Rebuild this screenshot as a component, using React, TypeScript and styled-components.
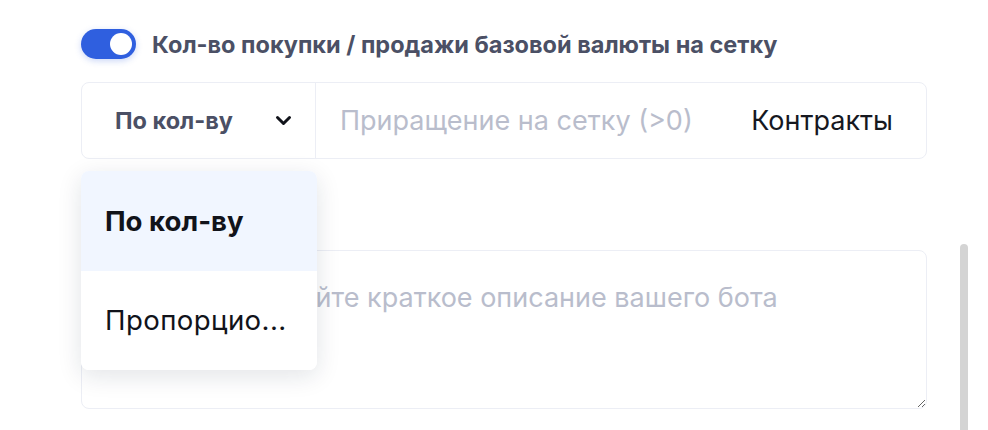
import React from "react";
import styled, { createGlobalStyle } from "styled-components";

const GlobalStyle = createGlobalStyle`
  html, body {
    margin: 0;
    padding: 0;
    background: #ffffff;
    font-family: Inter, "Noto Sans", sans-serif;
  }
  * {
    box-sizing: border-box;
  }
`;

const Page = styled.div`
  display: flex;
  width: 988px;
  height: 430px;
  overflow: hidden;
`;

const Content = styled.div`
  display: flex;
  flex-direction: column;
  width: 846px;
  margin-left: 81px;
  padding-top: 29px;
`;

const ToggleRow = styled.label`
  display: flex;
  align-items: center;
  gap: 16px;
`;

const Toggle = styled.span<{ $on: boolean }>`
  display: flex;
  align-items: center;
  justify-content: ${(p) => (p.$on ? "flex-end" : "flex-start")};
  width: 55px;
  height: 30px;
  padding: 4px;
  border-radius: 15px;
  background: ${(p) => (p.$on ? "#2f5fdf" : "#d5d8e2")};
  box-shadow: 0 2px 6px rgba(47, 95, 223, 0.25);
`;

const Knob = styled.span`
  width: 22px;
  height: 22px;
  border-radius: 50%;
  background: #ffffff;
`;

const ToggleText = styled.span`
  font-size: 23.5px;
  font-weight: 700;
  color: #4b5065;
`;

const InputGroup = styled.div`
  position: relative;
  display: flex;
  height: 77px;
  margin-top: 23px;
  border: 1px solid #eceef5;
  border-radius: 8px;
`;

const SelectBox = styled.div`
  display: flex;
  align-items: center;
  justify-content: space-between;
  width: 234px;
  padding: 0 23px 0 33px;
  border-right: 1px solid #eceef5;
  font-size: 23.5px;
  font-weight: 700;
  color: #4b5065;
`;

const Field = styled.div`
  flex: 1;
  display: flex;
  align-items: center;
  justify-content: space-between;
  padding: 0 33px 0 24px;
  font-size: 27px;
`;

const Placeholder = styled.span`
  color: #b9bdcc;
`;

const Unit = styled.span`
  color: #16181f;
`;

const Menu = styled.div`
  position: absolute;
  top: 88px;
  left: -1px;
  z-index: 2;
  width: 236px;
  border-radius: 8px;
  overflow: hidden;
  background: #ffffff;
  box-shadow: 0 6px 24px rgba(20, 30, 60, 0.12);
`;

const MenuItem = styled.div<{ $active?: boolean }>`
  display: flex;
  align-items: center;
  height: 99.5px;
  padding-left: 24px;
  font-size: 27.6px;
  font-weight: ${(p) => (p.$active ? 700 : 400)};
  letter-spacing: ${(p) => (p.$active ? "0" : "0.4px")};
  color: #11131a;
  background: ${(p) => (p.$active ? "#f1f6ff" : "#ffffff")};
  white-space: nowrap;
`;

const TextArea = styled.textarea`
  width: 846px;
  height: 159px;
  margin-top: 91px;
  padding: 29px 24px;
  border: 1px solid #eceef5;
  border-radius: 8px;
  resize: vertical;
  outline: none;
  font-family: Inter, "Noto Sans", sans-serif;
  font-size: 27px;
  line-height: 1.3;
  color: #16181f;

  &::placeholder {
    color: #b9bdcc;
  }
`;

const ScrollTrack = styled.div`
  width: 8px;
  margin-left: 33px;
  padding-top: 244px;
`;

const ScrollThumb = styled.div`
  height: 100%;
  border-radius: 4px 4px 0 0;
  background: #d4d4d4;
`;

const Chevron = () => (
  <svg width="17" height="11" viewBox="0 0 17 11" fill="none">
    <path
      d="M2.5 2.5l6 6 6-6"
      stroke="#11131a"
      strokeWidth="3"
      strokeLinecap="round"
      strokeLinejoin="round"
    />
  </svg>
);

const App: React.FC = () => {
  return (
    <Page>
      <GlobalStyle />
      <Content>
        <ToggleRow>
          <Toggle $on>
            <Knob />
          </Toggle>
          <ToggleText>Кол-во покупки / продажи базовой валюты на сетку</ToggleText>
        </ToggleRow>

        <InputGroup>
          <SelectBox>
            <span>По кол-ву</span>
            <Chevron />
          </SelectBox>
          <Field>
            <Placeholder>Приращение на сетку (&gt;0)</Placeholder>
            <Unit>Контракты</Unit>
          </Field>

          <Menu>
            <MenuItem $active>По кол-ву</MenuItem>
            <MenuItem>Пропорцио...</MenuItem>
          </Menu>
        </InputGroup>

        <TextArea
          aria-label="Описание"
          placeholder="Пожалуйста, дайте краткое описание вашего бота"
        />
      </Content>

      <ScrollTrack>
        <ScrollThumb />
      </ScrollTrack>
    </Page>
  );
};

export default App;
